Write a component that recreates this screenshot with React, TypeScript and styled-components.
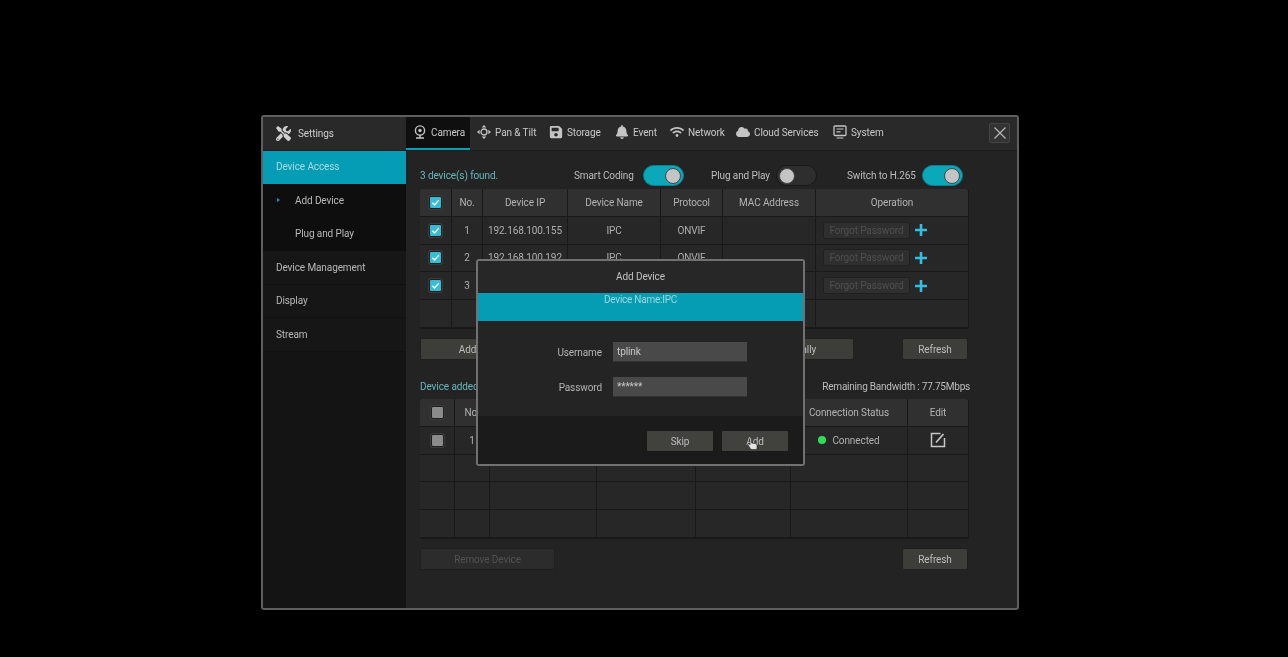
import React from 'react';
import styled, { createGlobalStyle } from 'styled-components';
import { FaTools, FaSave, FaBell, FaWifi, FaCloud } from 'react-icons/fa';

const Global = createGlobalStyle`
  html, body { margin: 0; padding: 0; background: #000; }
  body { font-family: Roboto, "Liberation Sans", sans-serif; }
  * { box-sizing: border-box; }
`;
const Page = styled.div`
  width: 1288px; height: 657px; padding: 115px 0 0 261px; background: #000; overflow: hidden;
`;
const Win = styled.div`
  position: relative; width: 758px; height: 495px; border: 2px solid #5e5e5e; border-radius: 3px;
  background: #232323; display: flex; flex-direction: column; color: #bdbdbd;
  font-size: 10px; letter-spacing: -0.1px; white-space: nowrap; filter: blur(0.5px);
`;
const TopBar = styled.div`
  height: 33.5px; display: flex; align-items: stretch; background: #292929; border-bottom: 1px solid #1c1c1c; flex: none;
`;
const Brand = styled.div`
  width: 143px; display: flex; align-items: center; gap: 7px; padding-left: 13px; color: #cfcfcf; flex: none;
  svg { width: 15px; height: 15px; }
`;
const Tab = styled.div<{ $active?: boolean; $w: number; $pad?: number }>`
  width: ${p => p.$w}px; display: flex; align-items: center; gap: 4px; padding-left: ${p => p.$pad ?? 0}px; flex: none;
  background: ${p => p.$active ? '#0f0f0f' : 'transparent'};
  border-bottom: 2px solid ${p => p.$active ? '#0c9db5' : 'transparent'};
  color: #c9c9c9;
  svg { width: 14px; height: 14px; color: #c4c4c4; flex: none; }
`;
const Close = styled.button`
  position: absolute; right: 7px; top: 6px; width: 21px; height: 20px; padding: 0; background: #333; border: 1px solid #444; border-radius: 2px;
  display: flex; align-items: center; justify-content: center;
  svg { width: 14px; height: 14px; }
`;
const Body = styled.div` flex: 1; display: flex; min-height: 0; `;
const Side = styled.div` width: 143px; background: #141414; flex: none; `;
const SideItem = styled.div<{ $active?: boolean; $sub?: boolean }>`
  position: relative; height: 33.5px; display: flex; align-items: center; padding-left: ${p => p.$sub ? 32 : 13}px;
  background: ${p => p.$active ? '#059db5' : p.$sub ? '#0e0e0e' : '#161616'};
  color: ${p => p.$active ? '#a6dbe2' : '#b9b9b9'};
  border-bottom: 1px solid ${p => p.$active || p.$sub ? 'transparent' : '#111'};
`;
const Caret = styled.span`
  position: absolute; left: 14px; top: 14px; width: 0; height: 0;
  border-left: 3px solid #0c9db5; border-top: 2.5px solid transparent; border-bottom: 2.5px solid transparent;
`;
const Main = styled.div` flex: 1; padding: 13.5px 0 0 14px; min-width: 0; `;
const Status = styled.div`
  height: 25px; display: flex; align-items: center; padding-bottom: 2px;
`;
const Teal = styled.span<{ $w?: number }>` color: #69b6bd; width: ${p => p.$w ? `${p.$w}px` : 'auto'}; `;
const Label = styled.span<{ $ml?: number; $w: number }>`
  margin-left: ${p => p.$ml ?? 0}px; width: ${p => p.$w}px; color: #bdbdbd; flex: none;
`;
const Toggle = styled.span<{ $on?: boolean }>`
  display: flex; align-items: center; justify-content: ${p => p.$on ? 'flex-end' : 'flex-start'}; flex: none;
  width: 41px; height: 21px; border-radius: 11px; padding: 0 2px;
  background: ${p => p.$on ? '#0ba8ba' : '#2e2e2e'}; border: 1px solid ${p => p.$on ? '#0a7f90' : '#191919'};
`;
const Knob = styled.span` width: 16px; height: 16px; border-radius: 50%; background: #c4c4c4; border: 1px solid #444; `;
const Table = styled.div<{ $cols: string; $h: number }>`
  display: grid; grid-template-columns: ${p => p.$cols}; grid-template-rows: repeat(5, 1fr);
  width: 549px; height: ${p => p.$h}px; border-radius: 3px; overflow: hidden;
  border-right: 1px solid #191919; border-bottom: 1px solid #191919;
`;
const Cell = styled.div<{ $head?: boolean; $noRight?: boolean; $start?: boolean }>`
  display: flex; align-items: center; justify-content: ${p => p.$start ? 'flex-start' : 'center'}; overflow: hidden;
  gap: ${p => p.$start ? 4 : 6}px; padding-left: ${p => p.$start ? 7 : 0}px;
  background: ${p => p.$head ? '#303030' : '#272727'};
  border-right: ${p => p.$noRight ? 'none' : '1px solid #191919'}; border-bottom: 1px solid #191919;
  color: ${p => p.$head ? '#b3b3b3' : '#b0b0b0'};
`;
const Check = styled.span<{ $on?: boolean }>`
  width: 13px; height: 13px; border-radius: 2px; display: flex; align-items: center; justify-content: center;
  background: ${p => p.$on ? '#39bcd3' : '#8b8b8b'}; border: 1px solid #1f1f1f; box-shadow: 0 0 0 1px #3a3a3a;
  svg { width: 11px; height: 11px; }
`;
const Forgot = styled.span`
  width: 87px; height: 17px; display: flex; align-items: center; justify-content: center; border-radius: 2px; flex: none;
  background: #2f2f2f; border: 1px solid #202020; color: #4f4f4f;
`;
const Plus = styled.svg` width: 14px; height: 14px; flex: none; `;
const Actions = styled.div<{ $mt: number }>`
  display: flex; margin-top: ${p => p.$mt}px; width: 549px; align-items: center;
`;
const Btn = styled.div<{ $w: number; $off?: boolean; $ml?: number }>`
  width: ${p => p.$w}px; height: 22px; display: flex; align-items: center; justify-content: center; border-radius: 2px; flex: none;
  margin-left: ${p => p.$ml ?? 0}px;
  background: ${p => p.$off ? '#2c2c2c' : '#3d3e3a'}; border: 1px solid #202020;
  color: ${p => p.$off ? '#515151' : '#bdbdbd'};
`;
const Info = styled.div`
  width: 550px; height: 26px; margin-top: 13px; display: flex; justify-content: space-between; align-items: center;
`;
const Bandwidth = styled.span` letter-spacing: -0.22px; `;
const Dot = styled.span`
  width: 8px; height: 8px; border-radius: 50%; background: #2fdc55;
`;
const EditIcon = styled.svg` width: 16px; height: 16px; `;
const Modal = styled.div`
  position: absolute; left: 213px; top: 142px; width: 329px; height: 207px; border: 2px solid #717171; border-radius: 3px;
  background: #242424; display: flex; flex-direction: column; overflow: hidden; z-index: 2;
`;
const MHead = styled.div`
  height: 32px; display: flex; align-items: center; justify-content: center; color: #c2c2c2; flex: none; background: #272727; padding-bottom: 2px;
`;
const MStrip = styled.div`
  height: 28px; background: #049db3; color: #9fd8df; text-align: center; line-height: 12px; padding-top: 1px; flex: none; letter-spacing: -0.25px;
`;
const MBody = styled.div`
  flex: 1; display: flex; flex-direction: column; gap: 15px; padding-top: 21px;
`;
const Field = styled.div` display: flex; align-items: center; `;
const FLabel = styled.span` width: 124px; text-align: right; margin-right: 11px; color: #b5b5b5; `;
const Input = styled.div`
  width: 134px; height: 20px; background: #494949; color: #c8c8c8; padding-left: 4px; display: flex; align-items: center; border-bottom: 1px solid #333;
`;
const MFoot = styled.div`
  height: 48px; flex: none; background: #1b1b1b; display: flex; justify-content: flex-end; align-items: flex-start; gap: 9px; padding: 15px 15px 0 0;
`;
const MBtn = styled.div`
  position: relative; width: 66px; height: 20px; display: flex; align-items: center; justify-content: center; background: #41423e; color: #bdbdbd; border-radius: 1px;
`;
const Cursor = styled.svg` position: absolute; left: 25px; top: 6px; width: 11px; height: 13px; `;

const CheckMark = () => (
  <svg viewBox="0 0 12 12"><path d="M2.5 6.2 5 8.6 9.6 3.4" fill="none" stroke="#eaf9fb" strokeWidth="1.6" /></svg>
);
const PlusIcon = () => (
  <Plus viewBox="0 0 14 14"><path d="M7 1v12M1 7h12" stroke="#35bfdc" strokeWidth="2.6" /></Plus>
);
const WebcamIcon = () => (
  <svg viewBox="0 0 14 14"><circle cx="7" cy="5.5" r="4.6" fill="none" stroke="#c4c4c4" strokeWidth="1.4" /><circle cx="7" cy="5.5" r="1.7" fill="#c4c4c4" /><path d="M3 13h8M7 10v3" stroke="#c4c4c4" strokeWidth="1.5" /></svg>
);
const PanIcon = () => (
  <svg viewBox="0 0 14 14" fill="#c4c4c4"><circle cx="7" cy="7" r="3" fill="none" stroke="#c4c4c4" strokeWidth="1.3" /><path d="M7 0l2.3 2.6H4.7zM7 14l2.3-2.6H4.7zM0 7l2.6-2.3v4.6zM14 7l-2.6-2.3v4.6z" /></svg>
);
const SystemIcon = () => (
  <svg viewBox="0 0 14 14" fill="none" stroke="#c4c4c4"><rect x="1" y="1" width="12" height="9.5" rx="1" strokeWidth="1.3" /><path d="M3.5 4h7M3.5 6.8h4M3.5 13h7" strokeWidth="1.2" /></svg>
);

const cols1 = '32px 31px 85px 93px 62px 93px 153px';
const cols2 = '35px 35px 107px 99px 95px 117px 61px';
const ips = ['192.168.100.155', '192.168.100.192', '192.168.100.193'];

export default function App() {
  return (
    <Page>
      <Global />
      <Win>
        <TopBar>
          <Brand><FaTools />Settings</Brand>
          <Tab $active $w={64} $pad={7}><WebcamIcon />Camera</Tab>
          <Tab $w={79} $pad={7}><PanIcon />Pan &amp; Tilt</Tab>
          <Tab $w={66}><FaSave />Storage</Tab>
          <Tab $w={55}><FaBell />Event</Tab>
          <Tab $w={66}><FaWifi />Network</Tab>
          <Tab $w={97}><FaCloud />Cloud Services</Tab>
          <Tab $w={60}><SystemIcon />System</Tab>
        </TopBar>
        <Close aria-label="Close">
          <svg viewBox="0 0 14 14"><path d="M1.5 1.5l11 11M12.5 1.5l-11 11" stroke="#b5b5b5" strokeWidth="1.2" /></svg>
        </Close>
        <Body>
          <Side>
            <SideItem $active>Device Access</SideItem>
            <SideItem $sub><Caret />Add Device</SideItem>
            <SideItem $sub>Plug and Play</SideItem>
            <SideItem>Device Management</SideItem>
            <SideItem>Display</SideItem>
            <SideItem>Stream</SideItem>
          </Side>
          <Main>
            <Status>
              <Teal $w={154}>3 device(s) found.</Teal>
              <Label $w={69}>Smart Coding</Label>
              <Toggle $on><Knob /></Toggle>
              <Label $ml={27} $w={65}>Plug and Play</Label>
              <Toggle><Knob /></Toggle>
              <Label $ml={30} $w={75}>Switch to H.265</Label>
              <Toggle $on><Knob /></Toggle>
            </Status>
            <Table $cols={cols1} $h={140}>
              <Cell $head><Check $on><CheckMark /></Check></Cell>
              {['No.', 'Device IP', 'Device Name', 'Protocol', 'MAC Address', 'Operation'].map(h => <Cell $head key={h}>{h}</Cell>)}
              {ips.map((ip, i) => (
                <React.Fragment key={ip}>
                  <Cell><Check $on><CheckMark /></Check></Cell>
                  <Cell>{i + 1}</Cell>
                  <Cell>{ip}</Cell>
                  <Cell>IPC</Cell>
                  <Cell>ONVIF</Cell>
                  <Cell />
                  <Cell $start><Forgot>Forgot Password</Forgot><PlusIcon /></Cell>
                </React.Fragment>
              ))}
              {Array.from({ length: 7 }).map((_, i) => <Cell key={i} $noRight={i >= 2 && i <= 4} />)}
            </Table>
            <Actions $mt={9}>
              <Btn $w={135}>Add Selected</Btn>
              <Btn $w={135} $ml={164}>Add Manually</Btn>
              <Btn $w={66} $ml={48}>Refresh</Btn>
            </Actions>
            <Info>
              <Teal>Device added</Teal>
              <Bandwidth>Remaining Bandwidth : 77.75Mbps</Bandwidth>
            </Info>
            <Table $cols={cols2} $h={140}>
              <Cell $head><Check /></Cell>
              {['No.', 'Device Name', 'Device IP', 'Protocol', 'Connection Status', 'Edit'].map(h => <Cell $head key={h}>{h}</Cell>)}
              <Cell><Check /></Cell>
              <Cell>1</Cell>
              <Cell />
              <Cell />
              <Cell />
              <Cell><Dot />Connected</Cell>
              <Cell>
                <EditIcon viewBox="0 0 16 16" fill="none" stroke="#c8c8c8">
                  <path d="M10.5 1.5H1.5v13h13V6" strokeWidth="1.5" />
                  <path d="M6 10.5 13.5 2" strokeWidth="1.7" />
                </EditIcon>
              </Cell>
              {Array.from({ length: 21 }).map((_, i) => <Cell key={i} />)}
            </Table>
            <Actions $mt={9}>
              <Btn $w={135} $off>Remove Device</Btn>
              <Btn $w={66} $ml={347}>Refresh</Btn>
            </Actions>
          </Main>
        </Body>
        <Modal>
          <MHead>Add Device</MHead>
          <MStrip>Device Name:IPC</MStrip>
          <MBody>
            <Field><FLabel>Username</FLabel><Input>tplink</Input></Field>
            <Field><FLabel>Password</FLabel><Input>******</Input></Field>
          </MBody>
          <MFoot>
            <MBtn>Skip</MBtn>
            <MBtn>Add
              <Cursor viewBox="0 0 11 13">
                <path d="M3 1.5c0-1 1.5-1 1.5 0V6l3.5.6c1.3.3 2 .9 2 2V11c0 1-.8 1.5-1.8 1.5H5c-.8 0-1.3-.4-1.7-1L1 8c-.6-1 .7-1.7 1.4-1L3 7.8z" fill="#e4e4e4" stroke="#222" strokeWidth=".6" />
              </Cursor>
            </MBtn>
          </MFoot>
        </Modal>
      </Win>
    </Page>
  );
}
